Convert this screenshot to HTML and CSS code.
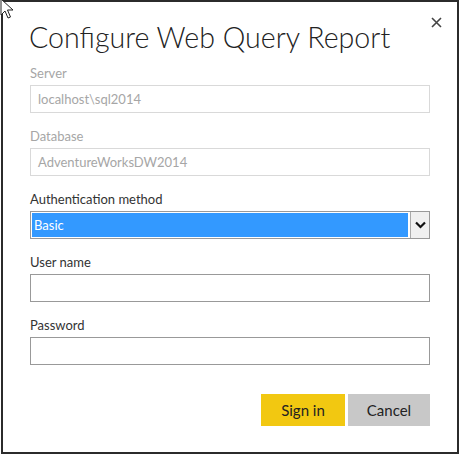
FILE: index.html
```html
<!DOCTYPE html>
<html>
<head>
    <title>Configure Web Query Report</title>
    <meta charset="UTF-8">
    <link rel="stylesheet" href="styles.css">
</head>
<body>
    <div class="dialog">
        <button type="button" class="close" aria-label="Close">
            <svg width="11" height="11" viewBox="0 0 11 11"><path d="M1 1L10 10M10 1L1 10" stroke="#444" stroke-width="1.6"/></svg>
        </button>

        <h1>Configure Web Query Report</h1>

        <div class="field">
            <label class="muted">Server</label>
            <div class="input disabled">localhost\sql2014</div>
        </div>

        <div class="field">
            <label class="muted">Database</label>
            <div class="input disabled">AdventureWorksDW2014</div>
        </div>

        <div class="field">
            <label>Authentication method</label>
            <div class="select">
                <div class="select-value">Basic</div>
                <div class="select-arrow">
                    <svg width="11" height="8" viewBox="0 0 11 8"><path d="M1 1.5L5.5 6L10 1.5" fill="none" stroke="#111" stroke-width="2.2"/></svg>
                </div>
            </div>
        </div>

        <div class="field">
            <label>User name</label>
            <div class="input"></div>
        </div>

        <div class="field">
            <label>Password</label>
            <div class="input"></div>
        </div>

        <div class="actions">
            <button type="button" class="btn primary">Sign in</button>
            <button type="button" class="btn">Cancel</button>
        </div>
    </div>

    <svg class="cursor" width="14" height="22" viewBox="0 0 14 22">
        <path d="M1 1L1 17L5 13L8 20L10.5 19L7.5 12L13 12Z" fill="#fff" stroke="#222" stroke-width="1"/>
    </svg>
</body>
</html>
```

FILE: styles.css
```css
:root {
    --text-color: #333;
    --muted-color: #a6a6a6;
    --border-color: #999;
    --light-border: #d9d9d9;
}

body {
    margin: 0;
    background: white;
    font-family: Lato, "Open Sans", sans-serif;
    color: var(--text-color);
}

.dialog {
    position: relative;
    box-sizing: border-box;
    width: 458px;
    height: 454px;
    margin-left: 1px;
    border: 2px solid #2b2b2b;
    background: white;
    padding: 15px 27px 0 27px;
}

.close {
    position: absolute;
    top: 15px;
    right: 15px;
    border: none;
    background: none;
    padding: 0;
    line-height: 0;
}

h1 {
    margin: 0 0 8px -1px;
    font-weight: 300;
    font-size: 28.6px;
    line-height: 40px;
    color: #222;
}

.field {
    margin-bottom: 15px;
}

.field label {
    display: block;
    font-size: 13px;
    line-height: 16px;
    margin-bottom: 4px;
    color: var(--text-color);
}

.field label.muted {
    color: var(--muted-color);
}

.input {
    box-sizing: border-box;
    height: 28px;
    border: 1px solid var(--border-color);
    padding: 0 7px;
    font-size: 13px;
    line-height: 26px;
}

.input.disabled {
    border-color: var(--light-border);
    color: var(--muted-color);
}

.select {
    display: flex;
    box-sizing: border-box;
    height: 28px;
    margin-top: 1px;
    border: 1px solid var(--border-color);
}

.select-value {
    flex: 1;
    background: #3399ff;
    color: white;
    font-size: 13px;
    line-height: 24px;
    padding: 0 2px;
    margin: 1px;
    border-right: 1px solid #fff;
}

.select-arrow {
    width: 18px;
    background: #f0f0f0;
    border-left: 1px solid #aaa;
    display: flex;
    align-items: center;
    justify-content: center;
}

.actions {
    display: flex;
    justify-content: flex-end;
    gap: 3px;
    margin-top: 29px;
}

.btn {
    width: 82px;
    height: 32px;
    border: none;
    background: #c8c8c8;
    color: #222;
    font-family: inherit;
    font-size: 15px;
}

.btn.primary {
    width: 84px;
    background: #f2c811;
}

.cursor {
    position: absolute;
    top: -2px;
    left: 0;
}
```
